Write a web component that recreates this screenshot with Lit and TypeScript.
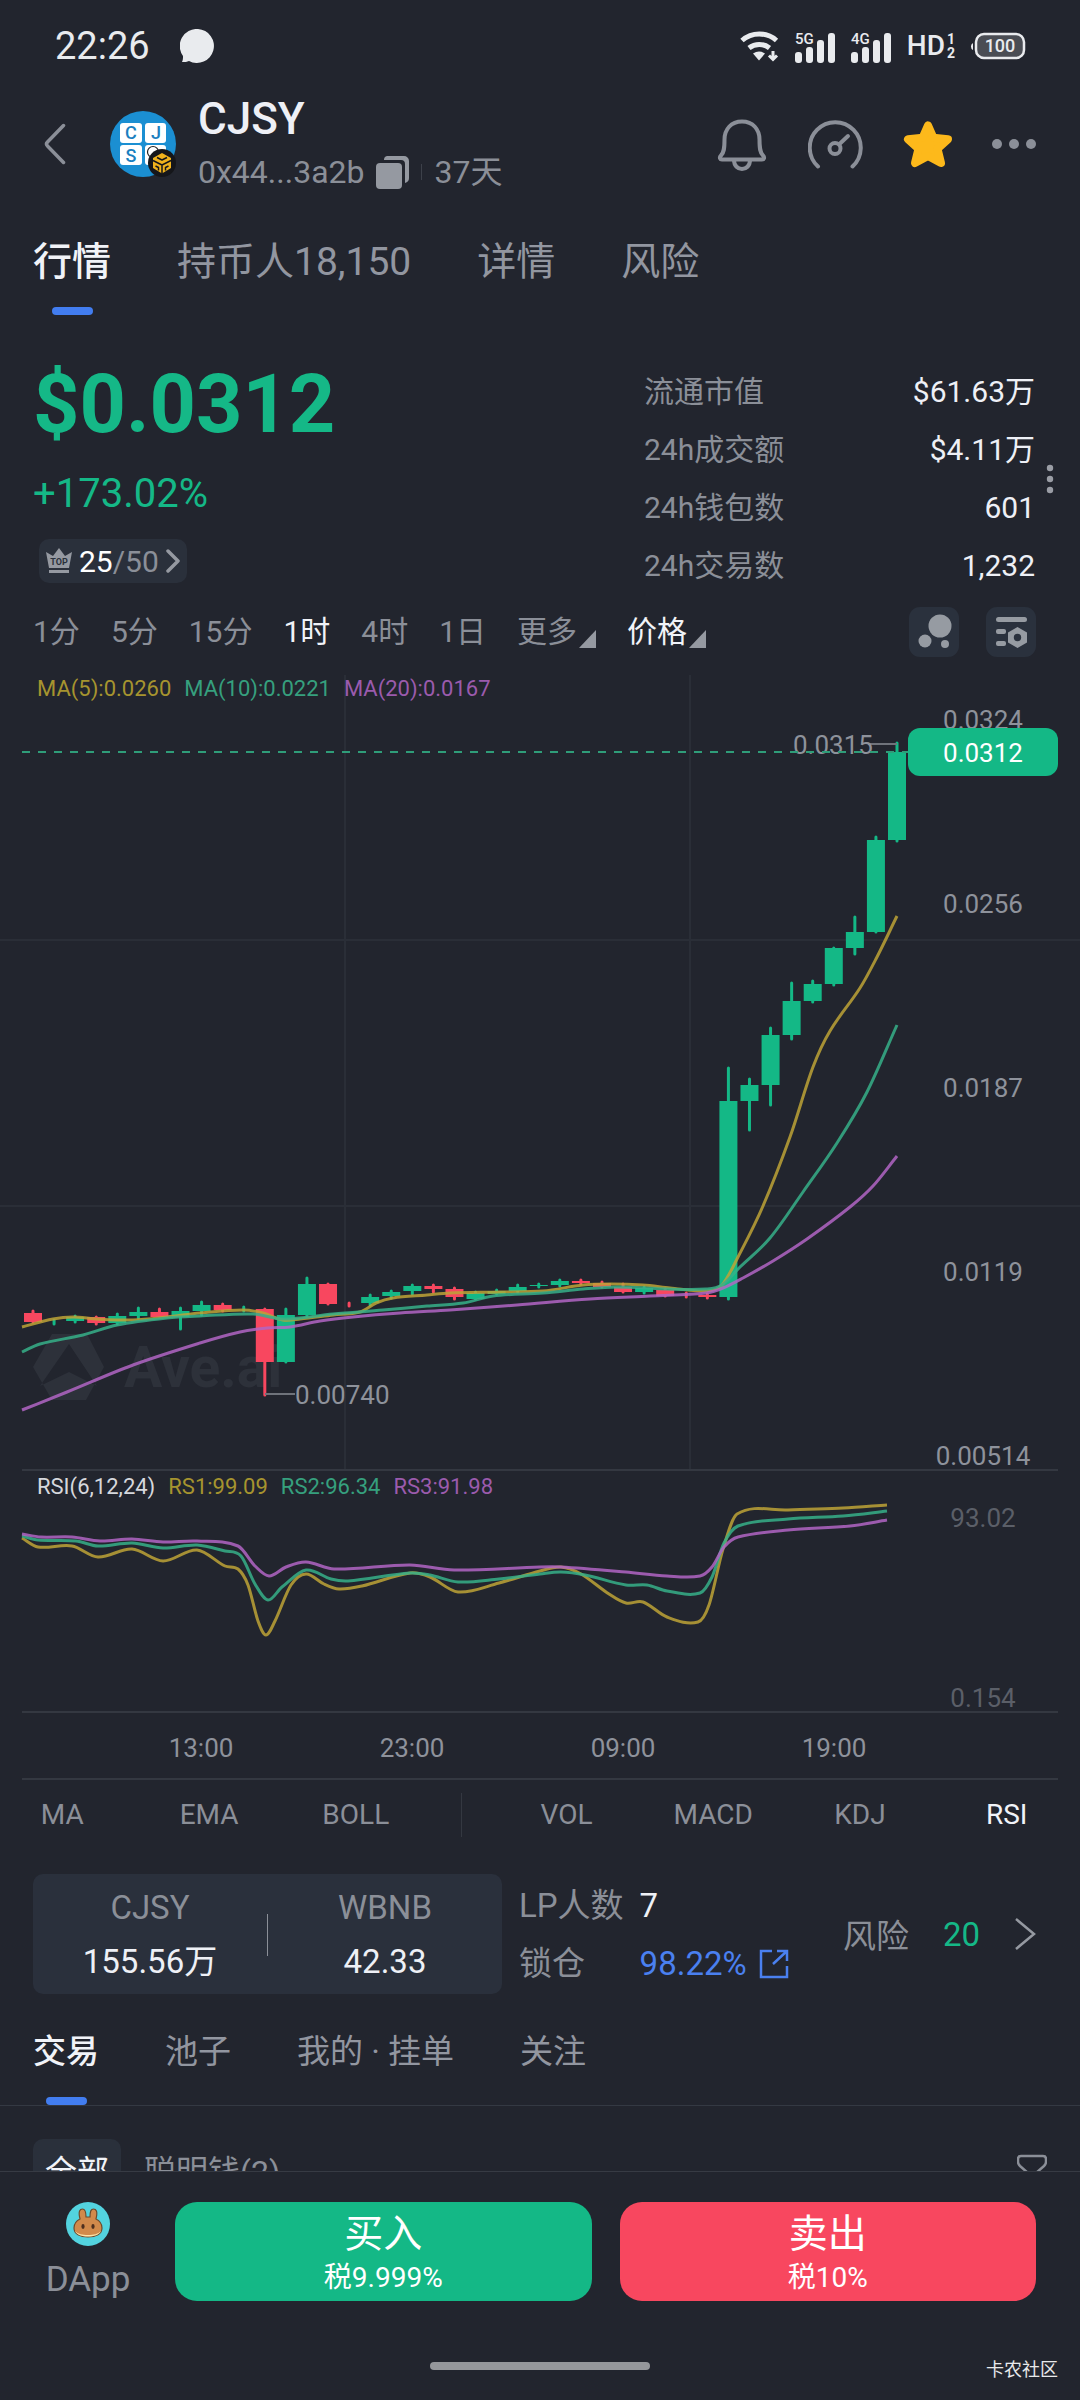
import { LitElement, html, svg, css } from "lit";
import { customElement, state } from "lit/decorators.js";
import { classMap } from "lit/directives/class-map.js";

type Point = [number, number];
type Candle = { up: boolean; open: number; close: number; high: number; low: number };

/* Candle geometry in chart units: direction, body top, body bottom, wick top, wick bottom. */
const CANDLES: Candle[] = (
  [
    [0, 1313, 1322, 1310, 1323], [1, 1321, 1321, 1319, 1325], [1, 1317, 1321, 1315, 1323],
    [0, 1317, 1323, 1316, 1325], [1, 1316, 1323, 1313, 1325], [1, 1312, 1316, 1307, 1319],
    [0, 1312, 1317, 1308, 1317], [1, 1311, 1317, 1307, 1330], [1, 1305, 1311, 1301, 1316],
    [0, 1305, 1310, 1303, 1312], [1, 1309, 1309, 1306, 1312], [0, 1309, 1362, 1308, 1396],
    [1, 1315, 1362, 1308, 1363], [1, 1284, 1315, 1277, 1317], [0, 1284, 1304, 1283, 1305],
    [0, 1304, 1304, 1302, 1307], [1, 1297, 1303, 1294, 1306], [1, 1292, 1296, 1290, 1299],
    [1, 1286, 1291, 1284, 1295], [0, 1286, 1289, 1284, 1293], [0, 1289, 1297, 1287, 1300],
    [1, 1293, 1299, 1291, 1300], [1, 1291, 1294, 1289, 1295], [1, 1287, 1291, 1284, 1293],
    [1, 1285, 1286, 1283, 1288], [1, 1281, 1285, 1279, 1287], [0, 1281, 1283, 1279, 1285],
    [0, 1283, 1287, 1281, 1288], [0, 1287, 1292, 1283, 1293], [1, 1288, 1292, 1286, 1294],
    [0, 1290, 1296, 1288, 1297], [0, 1295, 1295, 1292, 1298], [0, 1295, 1297, 1293, 1299],
    [1, 1101, 1297, 1067, 1300], [1, 1085, 1101, 1078, 1131], [1, 1035, 1085, 1027, 1106],
    [1, 1001, 1035, 982, 1040], [1, 984, 1001, 980, 1003], [1, 948, 984, 947, 986],
    [1, 932, 948, 916, 955], [1, 840, 932, 836, 933], [1, 752, 840, 742, 842],
  ] as number[][]
).map(([up, open, close, high, low]) => ({ up: up === 1, open, close, high, low }));

const MA5: Point[] = [
  [22, 1327], [53, 1319], [73, 1317], [97, 1319], [133, 1320], [167, 1317], [200, 1313], [243, 1310],
  [263, 1313], [283, 1320], [300, 1319], [333, 1315], [360, 1312], [376, 1303], [393, 1298], [427, 1295],
  [450, 1293], [500, 1292], [543, 1291], [583, 1285], [610, 1284], [643, 1285], [670, 1288], [706, 1291],
  [722, 1285], [738, 1257], [763, 1206], [790, 1137], [813, 1067], [830, 1031], [860, 988], [877, 957],
  [897, 916],
];
const MA10: Point[] = [
  [22, 1352], [40, 1344], [83, 1335], [117, 1325], [167, 1318], [200, 1316], [253, 1314], [283, 1319],
  [333, 1314], [383, 1310], [427, 1306], [463, 1303], [493, 1296], [543, 1293], [583, 1289], [617, 1287],
  [667, 1289], [706, 1289], [722, 1285], [740, 1267], [770, 1238], [803, 1192], [837, 1143], [867, 1092],
  [897, 1025],
];
const MA20: Point[] = [
  [22, 1410], [67, 1392], [133, 1365], [200, 1343], [240, 1332], [267, 1328], [290, 1327], [320, 1321],
  [353, 1317], [400, 1313], [450, 1310], [517, 1305], [590, 1299], [650, 1296], [706, 1293], [723, 1288],
  [743, 1278], [773, 1261], [807, 1239], [850, 1207], [873, 1186], [897, 1156],
];
const RS1: Point[] = [
  [22, 1538], [38, 1547], [72, 1546], [98, 1557], [132, 1549], [163, 1561], [197, 1550], [225, 1566],
  [238, 1569], [248, 1585], [258, 1621], [266, 1635], [275, 1621], [291, 1585], [306, 1574], [324, 1584],
  [339, 1589], [362, 1586], [410, 1573], [430, 1577], [458, 1592], [499, 1583], [540, 1571], [561, 1567],
  [581, 1574], [609, 1594], [626, 1603], [643, 1602], [667, 1617], [698, 1622], [709, 1605], [723, 1549],
  [737, 1514], [788, 1510], [843, 1508], [887, 1505],
];
const RS2: Point[] = [
  [22, 1536], [38, 1540], [76, 1541], [98, 1546], [132, 1543], [163, 1548], [197, 1545], [225, 1551],
  [241, 1556], [255, 1584], [268, 1600], [282, 1587], [306, 1570], [331, 1579], [348, 1581], [410, 1573],
  [430, 1575], [458, 1582], [499, 1579], [540, 1574], [561, 1572], [585, 1575], [626, 1585], [647, 1585],
  [667, 1591], [700, 1593], [712, 1577], [724, 1543], [738, 1526], [788, 1519], [843, 1516], [887, 1511],
];
const RS3: Point[] = [
  [22, 1534], [41, 1537], [72, 1537], [100, 1541], [132, 1539], [163, 1542], [197, 1541], [238, 1546],
  [255, 1566], [269, 1576], [286, 1567], [306, 1562], [334, 1569], [410, 1565], [454, 1570], [540, 1567],
  [561, 1567], [626, 1572], [667, 1576], [700, 1576], [712, 1567], [724, 1547], [738, 1537], [788, 1530],
  [850, 1526], [887, 1520],
];

/* Catmull-Rom spline through the points, written as cubic Béziers. */
function spline(p: Point[]): string {
  let d = `M${p[0][0]} ${p[0][1]}`;
  for (let i = 0; i < p.length - 1; i++) {
    const a = p[Math.max(i - 1, 0)];
    const b = p[i];
    const c = p[i + 1];
    const e = p[Math.min(i + 2, p.length - 1)];
    const k = (c[0] - b[0]) / 3;
    const s1 = (c[1] - a[1]) / (c[0] - a[0] || 1);
    const s2 = (e[1] - b[1]) / (e[0] - b[0] || 1);
    d += `C${(b[0] + k).toFixed(1)} ${(b[1] + s1 * k).toFixed(1)} ${(c[0] - k).toFixed(1)} ${(c[1] - s2 * k).toFixed(1)} ${c[0]} ${c[1]}`;
  }
  return d;
}

const FONT = css`
  :host {
    font-family: Roboto, "Noto Sans CJK SC", sans-serif;
  }
  button {
    font: inherit;
    color: inherit;
    background: none;
    border: 0;
    padding: 0;
    margin: 0;
    white-space: nowrap;
  }
  svg {
    display: block;
  }
`;

@customElement("status-bar")
class StatusBar extends LitElement {
  static styles = [
    FONT,
    css`
      :host {
        display: flex;
        align-items: center;
        height: 92px;
        padding: 0 54px 0 55px;
        color: #e9ebee;
      }
      .time {
        font-size: 38px;
        line-height: 48px;
        margin-right: 30px;
      }
      .space {
        flex: 1;
      }
      .icons {
        display: flex;
        align-items: center;
        gap: 15px;
      }
      .signal {
        overflow: visible;
      }
      .hd {
        display: flex;
        align-items: center;
        gap: 2px;
        font-size: 28px;
        line-height: 32px;
        font-weight: 500;
      }
      .sim {
        display: grid;
        font-size: 14px;
        line-height: 14px;
        font-weight: 700;
      }
    `,
  ];

  private signal(label: string) {
    return html`<svg class="signal" width="41" height="34" viewBox="0 -4 41 34" fill="#e9ebee" aria-label=${label}>
      <text x="0" y="11" font-size="15" font-weight="500">${label}</text>
      <rect x="0" y="19" width="7" height="11" rx="3" />
      <rect x="11" y="14" width="7" height="16" rx="3" />
      <rect x="22" y="7" width="7" height="23" rx="3" />
      <rect x="33" y="0" width="7" height="30" rx="3" />
    </svg>`;
  }

  render() {
    return html`
      <span class="time">22:26</span>
      <svg width="35" height="35" viewBox="0 0 35 35" fill="#e9ebee">
        <path d="M18 0a17 17 0 1 1-9 32c-2 1-4 1-7 1 1-2 1-4 1-6A17 17 0 0 1 18 0z" />
      </svg>
      <span class="space"></span>
      <div class="icons">
        <svg width="40" height="32" viewBox="0 0 40 32" fill="none" stroke="#e9ebee" stroke-width="5">
          <path d="M2 10.500a26 26 0 0 1 34.500 0" />
          <path d="M9 18a16.500 16.500 0 0 1 20.500 0" />
          <path d="M13 23.500q6-4 12 0L19 30.500z" fill="#e9ebee" stroke="none" />
          <path d="M33 21v7M29 25.500l4 4 4-4" stroke-width="3" />
        </svg>
        ${this.signal("5G")} ${this.signal("4G")}
        <div class="hd">
          <span>HD</span>
          <span class="sim"><span>1</span><span>2</span></span>
        </div>
        <svg width="56" height="28" viewBox="0 0 56 28">
          <path d="M3 11a4 4 0 0 0 0 7z" fill="#e9ebee" />
          <rect x="6" y="2" width="48" height="24" rx="8" fill="#4a4d54" stroke="#e9ebee" stroke-width="2.500" />
          <text x="30" y="20" text-anchor="middle" font-size="18" font-weight="500" fill="#e9ebee">100</text>
        </svg>
      </div>
    `;
  }
}

@customElement("token-header")
class TokenHeader extends LitElement {
  static styles = [
    FONT,
    css`
      :host {
        display: flex;
        align-items: center;
        height: 104px;
        padding: 0 44px;
      }
      .back {
        margin-right: 44px;
      }
      .avatar {
        margin-right: 22px;
      }
      .names {
        display: flex;
        flex-direction: column;
        flex: 1;
        padding-top: 4px;
      }
      .symbol {
        margin: 0;
        font-size: 44px;
        line-height: 52px;
        font-weight: 500;
        color: #eef0f6;
      }
      .meta {
        display: flex;
        align-items: center;
        gap: 12px;
        font-size: 32px;
        line-height: 54px;
        color: #8b8f98;
      }
      .rule {
        width: 1px;
        height: 16px;
        background: #3d414a;
      }
      .actions {
        display: flex;
        align-items: center;
        gap: 36px;
      }
    `,
  ];

  render() {
    return html`
      <button class="back" aria-label="返回">
        <svg width="22" height="42" viewBox="0 0 22 42" fill="none" stroke="#8b8f98" stroke-width="3.500" stroke-linecap="round" stroke-linejoin="round">
          <path d="M19.500 2.500L3.500 19q-2 2 0 4L19.500 39.500" />
        </svg>
      </button>
      <svg class="avatar" width="66" height="66" viewBox="0 0 66 66" role="img" aria-label="CJSY">
        <circle cx="33" cy="33" r="33" fill="#1b8fd2" />
        <g fill="#fff">
          <rect x="10" y="12" width="22" height="20" rx="3" />
          <rect x="35" y="12" width="21" height="20" rx="3" />
          <rect x="10" y="34" width="22" height="20" rx="3" />
          <rect x="35" y="34" width="21" height="20" rx="3" />
        </g>
        <g fill="#1b7fc0" font-size="18" font-weight="500" text-anchor="middle">
          <text x="21" y="28">C</text>
          <text x="46" y="28">J</text>
          <text x="21" y="51">S</text>
        </g>
        <circle cx="43" cy="41" r="5.500" fill="none" stroke="#222" stroke-width="1.200" />
        <circle cx="52" cy="52" r="14" fill="#15161a" />
        <path d="M52 42l9 5v10l-9 5.500-9-5.500V47z" fill="#f0b21c" />
        <g fill="none" stroke="#15161a" stroke-width="1.500" stroke-linejoin="round">
          <path d="M43 49.500l9 4.500 9-4.500M52 54v9M47 46.500l5 2.500 5-2.500M45.500 55l3 1.500v3M58.500 55l-3 1.500v3" />
        </g>
      </svg>
      <div class="names">
        <h1 class="symbol">CJSY</h1>
        <div class="meta">
          <span>0x44...3a2b</span>
          <button aria-label="复制地址">
            <svg width="33" height="33" viewBox="0 0 33 33" fill="#9599a1">
              <path d="M11 0h17a5 5 0 0 1 5 5v17a5 5 0 0 1-4 5V8a4 4 0 0 0-4-4H8a4 4 0 0 1 3-4z" />
              <rect x="0" y="7" width="26" height="26" rx="4" />
            </svg>
          </button>
          <span class="rule"></span>
          <span>37天</span>
        </div>
      </div>
      <div class="actions">
        <button aria-label="提醒">
          <svg width="56" height="56" viewBox="2 0 56 56" fill="none" stroke="#8b8f98" stroke-width="4" stroke-linejoin="round">
            <path d="M28 5.500c-11 0-17.500 8-17.500 18 0 9-.5 13-3.500 16-2 2-1 4 1 4h40c2 0 3-2 1-4-3-3-3.500-7-3.500-16 0-10-6.500-18-17.500-18z" />
            <path d="M20 44c0 6 4 9 8 9s8-3 8-9" />
          </svg>
        </button>
        <button aria-label="速度">
          <svg width="56" height="56" viewBox="1 0 56 56" fill="none" stroke="#8b8f98" stroke-width="4" stroke-linecap="round">
            <path d="M11 50.500a25.500 25.500 0 1 1 34.500 0" />
            <circle cx="28" cy="32.500" r="5.500" />
            <path d="M32.500 28L41 20" />
          </svg>
        </button>
        <button aria-label="收藏">
          <svg width="56" height="56" viewBox="0 0 56 56" fill="#fdb91b" stroke="#fdb91b" stroke-width="8" stroke-linejoin="round">
            <path d="M28 9.500l5.500 12.300 14.500 1.400-10.500 9.600 3.500 14.200-13-7-13 7 3.500-14.200L8 23.200l14.500-1.400z" />
          </svg>
        </button>
        <button aria-label="更多">
          <svg width="44" height="56" viewBox="0 0 44 56" fill="#8b8f98">
            <circle cx="5" cy="28" r="5" />
            <circle cx="22" cy="28" r="5" />
            <circle cx="39" cy="28" r="5" />
          </svg>
        </button>
      </div>
    `;
  }
}

@customElement("tab-bar")
class TabBar extends LitElement {
  static properties = { tabs: { type: Array }, compact: { type: Boolean, reflect: true }, active: { state: true } };
  declare tabs: string[];
  declare compact: boolean;
  declare active: number;

  constructor() {
    super();
    this.tabs = [];
    this.compact = false;
    this.active = 0;
  }

  static styles = [
    FONT,
    css`
      :host {
        display: flex;
        gap: 66px;
        padding: 42px 33px 0;
        font-size: 39px;
        color: #9296a0;
      }
      :host([compact]) {
        padding-top: 34px;
        font-size: 33px;
        border-bottom: 1px solid #343943;
      }
      .tab {
        display: flex;
        flex-direction: column;
        align-items: center;
        gap: 21px;
        line-height: 48px;
      }
      .tab::after {
        content: "";
        width: 41px;
        height: 8px;
        border-radius: 4px;
      }
      .on {
        color: #f1f3f8;
        font-weight: 500;
      }
      .on::after {
        background: #427df0;
      }
    `,
  ];

  render() {
    return this.tabs.map(
      (t, i) => html`<button class=${classMap({ tab: true, on: i === this.active })} @click=${() => (this.active = i)}>${t}</button>`,
    );
  }
}

@customElement("token-overview")
class TokenOverview extends LitElement {
  static styles = [
    FONT,
    css`
      :host {
        display: grid;
        grid-template-columns: minmax(0, 1fr) 391px 8px;
        column-gap: 11px;
        padding: 48px 26px 0 33px;
      }
      .left {
        display: flex;
        flex-direction: column;
        align-items: flex-start;
        color: #15b887;
      }
      .price {
        font-size: 81px;
        line-height: 84px;
        font-weight: 700;
      }
      .change {
        margin-top: 23px;
        font-size: 40px;
        line-height: 48px;
      }
      .rank {
        display: flex;
        align-items: center;
        gap: 6px;
        height: 44px;
        margin: 21px 0 0 6px;
        padding: 0 6px;
        border-radius: 10px;
        background: #2a303b;
        color: #8b8f98;
        font-size: 30px;
      }
      .rank b {
        font-weight: 400;
        color: #fff;
      }
      .stats {
        margin: 0;
      }
      .stat {
        display: flex;
        justify-content: space-between;
        font-size: 30px;
        line-height: 58px;
        color: #8b8f98;
      }
      .stat dd {
        margin: 0;
        color: #eef0f6;
      }
      .dots {
        align-self: center;
      }
    `,
  ];

  render() {
    const stats = [
      ["流通市值", "$61.63万"],
      ["24h成交额", "$4.11万"],
      ["24h钱包数", "601"],
      ["24h交易数", "1,232"],
    ];
    return html`
      <div class="left">
        <div class="price">$0.0312</div>
        <div class="change">+173.02%</div>
        <button class="rank">
          <svg width="28" height="28" viewBox="0 0 28 28" fill="#9599a1">
            <path d="M1 5l7 4 6-8 6 8 7-4-3 16H4z" />
            <rect x="4" y="23" width="20" height="3" />
            <text x="14" y="18" font-size="9" font-weight="700" text-anchor="middle" fill="#2a303b">TOP</text>
          </svg>
          <span><b>25</b>/50</span>
          <svg width="16" height="24" viewBox="0 0 16 24" fill="none" stroke="#9599a1" stroke-width="3.500" stroke-linecap="round" stroke-linejoin="round">
            <path d="M3 2l10 10L3 22" />
          </svg>
        </button>
      </div>
      <dl class="stats">
        ${stats.map(([k, v]) => html`<div class="stat"><dt>${k}</dt><dd>${v}</dd></div>`)}
      </dl>
      <svg class="dots" width="8" height="30" viewBox="0 0 8 30" fill="#9a9da5">
        <circle cx="4" cy="4" r="3.200" />
        <circle cx="4" cy="15" r="3.200" />
        <circle cx="4" cy="26" r="3.200" />
      </svg>
    `;
  }
}

@customElement("interval-bar")
class IntervalBar extends LitElement {
  @state() private active = 3;

  static styles = [
    FONT,
    css`
      :host {
        display: flex;
        align-items: center;
        gap: 31px;
        padding: 12px 44px 0 33px;
        font-size: 30px;
        line-height: 50px;
        color: #8b8f98;
      }
      .on {
        color: #f1f3f8;
      }
      .menu {
        display: flex;
        align-items: flex-end;
        gap: 2px;
      }
      .menu svg {
        margin-bottom: 9px;
      }
      .tools {
        display: flex;
        gap: 27px;
        margin-left: auto;
      }
      .tool {
        width: 50px;
        height: 50px;
        border-radius: 11px;
        background: #2a313d;
      }
    `,
  ];

  private corner() {
    return html`<svg width="17" height="18" viewBox="0 0 17 18" fill="#9599a1"><path d="M17 0v18H0z" /></svg>`;
  }

  render() {
    return html`
      ${["1分", "5分", "15分", "1时", "4时", "1日"].map(
        (t, i) => html`<button class=${classMap({ on: i === this.active })} @click=${() => (this.active = i)}>${t}</button>`,
      )}
      <button class="menu">更多${this.corner()}</button>
      <button class="menu on">价格${this.corner()}</button>
      <div class="tools">
        <button class="tool" aria-label="气泡图">
          <svg width="50" height="50" viewBox="0 0 50 50" fill="#969ba2">
            <circle cx="31" cy="19" r="11.500" />
            <circle cx="16" cy="34" r="6.500" />
            <circle cx="36" cy="37" r="4" />
          </svg>
        </button>
        <button class="tool" aria-label="图表设置">
          <svg width="50" height="50" viewBox="0 0 50 50" fill="#969ba2">
            <rect x="10" y="10" width="31" height="5" rx="2.500" />
            <rect x="10" y="22" width="10" height="5" rx="2" />
            <rect x="10" y="34" width="10" height="5" rx="2" />
            <path fill-rule="evenodd" d="M31.500 20l9.500 5.500v10L31.500 41 22 35.500v-10zm0 6.800a3.700 3.700 0 1 0 0 7.400 3.700 3.700 0 0 0 0-7.400z" />
          </svg>
        </button>
      </div>
    `;
  }
}

@customElement("price-chart")
class PriceChart extends LitElement {
  static styles = [
    FONT,
    css`
      :host {
        display: block;
        position: relative;
      }
      .plot {
        width: 100%;
        height: auto;
      }
      .legend {
        position: absolute;
        left: 37px;
        display: flex;
        gap: 13px;
        font-size: 22px;
        line-height: 26px;
      }
      .ma {
        top: 19px;
      }
      .rsi {
        top: 817px;
      }
      .white { color: #d6d8dd; }
      .yellow { color: #a6942f; }
      .green { color: #36a07e; }
      .purple { color: #9b5bad; }
      .grid { stroke: #2a2e37; stroke-width: 2; }
      .frame { stroke: #343841; stroke-width: 2; }
      .mark { fill: #2d313a; }
      .brand { fill: #2d313a; font-size: 57px; font-weight: 700; }
      .up { fill: #14b886; stroke: #14b886; }
      .down { fill: #f8475f; stroke: #f8475f; }
      .wick { stroke-width: 3; stroke-linecap: round; }
      .body { stroke: none; }
      .line { fill: none; stroke-width: 3; stroke-opacity: 0.85; }
      .l1 { stroke: #bda336; }
      .l2 { stroke: #36b088; }
      .l3 { stroke: #b265c4; }
      .now { stroke: #2f9d79; stroke-width: 2; stroke-dasharray: 8 8; }
      .lead { stroke: #6f737b; stroke-width: 2; }
      .num { fill: #8e929b; font-size: 26px; }
      .mid { text-anchor: middle; }
      .dim { fill: #5b5f68; }
      .tag { fill: #14b886; }
      .tagnum { fill: #fff; }
    `,
  ];

  render() {
    const axis: [string, number][] = [
      ["0.0324", 729], ["0.0256", 913], ["0.0187", 1097], ["0.0119", 1281], ["0.00514", 1465],
    ];
    const times: [string, number][] = [["13:00", 201], ["23:00", 412], ["09:00", 623], ["19:00", 834]];
    return html`
      <svg class="plot" viewBox="0 657 1080 1123" role="img" aria-label="CJSY 1时 K线图">
        <path class="grid" d="M345 675V1470M690 675V1470M0 940H1080M0 1206H1080" />
        <path class="mark" fill-rule="evenodd" d="M52 1334h35l17 33-18 33H52l-19-33zM69 1344l-29 42 29-14 28 14z" />
        <text class="brand" x="124" y="1387">Ave.ai</text>
        <path class="frame" d="M22 1470H1058M22 1712H1058M22 1779H1058" />
        ${CANDLES.map((c, i) => {
          const x = 33 + (i * 864) / 41;
          return svg`<g class=${c.up ? "up" : "down"}>
            <path class="wick" d="M${x} ${c.high + 1}V${c.low - 1}" />
            <rect class="body" x=${x - 9} y=${c.open} width="18" height=${c.close - c.open} />
          </g>`;
        })}
        <path class="line l1" d=${spline(MA5)} />
        <path class="line l2" d=${spline(MA10)} />
        <path class="line l3" d=${spline(MA20)} />
        <path class="line l1" d=${spline(RS1)} />
        <path class="line l2" d=${spline(RS2)} />
        <path class="line l3" d=${spline(RS3)} />
        <path class="lead" d="M868 744H897M265 1394H295" />
        <text class="num" x="793" y="754">0.0315</text>
        <text class="num" x="295" y="1404">0.00740</text>
        <path class="now" d="M22 752H908" />
        ${axis.map(([t, y]) => svg`<text class="num mid" x="983" y=${y}>${t}</text>`)}
        <text class="num mid dim" x="983" y="1527">93.02</text>
        <text class="num mid dim" x="983" y="1707">0.154</text>
        <rect class="tag" x="908" y="728" width="150" height="48" rx="12" />
        <text class="num mid tagnum" x="983" y="762">0.0312</text>
        ${times.map(([t, x]) => svg`<text class="num mid" x=${x} y="1757">${t}</text>`)}
      </svg>
      <div class="legend ma">
        <span class="yellow">MA(5):0.0260</span>
        <span class="green">MA(10):0.0221</span>
        <span class="purple">MA(20):0.0167</span>
      </div>
      <div class="legend rsi">
        <span class="white">RSI(6,12,24)</span>
        <span class="yellow">RS1:99.09</span>
        <span class="green">RS2:96.34</span>
        <span class="purple">RS3:91.98</span>
      </div>
    `;
  }
}

@customElement("indicator-bar")
class IndicatorBar extends LitElement {
  @state() private sub = "RSI";

  static styles = [
    FONT,
    css`
      :host {
        display: grid;
        grid-template-columns: repeat(3, 1fr) 64px repeat(4, 1fr);
        align-items: center;
        height: 70px;
        margin-left: -11px;
        font-size: 28px;
        line-height: 44px;
        color: #8b8f98;
      }
      .rule {
        justify-self: center;
        width: 1px;
        height: 44px;
        background: #343841;
      }
      .on {
        color: #f1f3f8;
      }
    `,
  ];

  render() {
    return html`
      ${["MA", "EMA", "BOLL"].map((t) => html`<button>${t}</button>`)}
      <span class="rule"></span>
      ${["VOL", "MACD", "KDJ", "RSI"].map(
        (t) => html`<button class=${classMap({ on: t === this.sub })} @click=${() => (this.sub = t)}>${t}</button>`,
      )}
    `;
  }
}

@customElement("pool-summary")
class PoolSummary extends LitElement {
  static styles = [
    FONT,
    css`
      :host {
        display: flex;
        align-items: center;
        margin-top: 24px;
        padding: 0 44px 0 33px;
        font-size: 33px;
        color: #8b8f98;
      }
      .pair {
        display: grid;
        grid-template-columns: 1fr 1px 1fr;
        align-items: center;
        box-sizing: border-box;
        flex: 0 1 469px;
        height: 120px;
        padding-top: 2px;
        border-radius: 10px;
        background: #2a303c;
        text-align: center;
        line-height: 54px;
      }
      .rule {
        height: 42px;
        background: #8b8f98;
      }
      .value {
        color: #eef0f6;
      }
      .lock {
        display: grid;
        grid-template-columns: auto auto;
        column-gap: 16px;
        margin-left: 17px;
        padding-top: 2px;
        line-height: 58px;
      }
      .link {
        display: flex;
        align-items: center;
        gap: 12px;
        color: #4a80f0;
        text-decoration: none;
      }
      .risk {
        display: flex;
        align-items: center;
        margin-left: auto;
        gap: 34px;
      }
      .score {
        color: #15b887;
      }
    `,
  ];

  render() {
    return html`
      <div class="pair">
        <div><div>CJSY</div><div class="value">155.56万</div></div>
        <span class="rule"></span>
        <div><div>WBNB</div><div class="value">42.33</div></div>
      </div>
      <div class="lock">
        <span>LP人数</span><span class="value">7</span>
        <span>锁仓</span>
        <a class="link" href="#lock">98.22%
          <svg width="30" height="30" viewBox="0 0 30 30" fill="none" stroke="#4a80f0" stroke-width="2.500">
            <path d="M13 2H2v26h26V17M18 2h10v10M28 2L14 15" />
          </svg>
        </a>
      </div>
      <button class="risk">
        <span>风险</span>
        <span class="score">20</span>
        <svg width="22" height="34" viewBox="0 0 22 34" fill="none" stroke="#9599a1" stroke-width="2.500">
          <path d="M2 2l18 15L2 32" />
        </svg>
      </button>
    `;
  }
}

@customElement("trade-filter")
class TradeFilter extends LitElement {
  static styles = [
    FONT,
    css`
      :host {
        display: flex;
        align-items: flex-start;
        flex: 1;
        min-height: 0;
        overflow: hidden;
        padding: 33px 33px 0;
        font-size: 32px;
        line-height: 66px;
        color: #8b8f98;
      }
      .all {
        padding: 0 12px;
        border-radius: 10px;
        background: #2a303b;
        color: #f1f3f8;
      }
      .smart {
        margin-left: 23px;
      }
      .filter {
        margin: 15px 0 0 auto;
      }
    `,
  ];

  render() {
    return html`
      <button class="all">全部</button>
      <button class="smart">聪明钱(2)</button>
      <button class="filter" aria-label="筛选">
        <svg width="30" height="32" viewBox="0 0 30 32" fill="none" stroke="#8b8f98" stroke-width="2.500" stroke-linejoin="round">
          <path d="M4 2h22q3 0 3 3v3q0 2-2 4l-8 7v11l-8-4v-7L3 12Q1 10 1 8V5q0-3 3-3z" />
        </svg>
      </button>
    `;
  }
}

@customElement("trade-footer")
class TradeFooter extends LitElement {
  static styles = [
    FONT,
    css`
      :host {
        display: block;
        border-top: 1px solid #373b44;
        color: #fff;
      }
      .row {
        display: grid;
        grid-template-columns: 101px 1fr 1fr;
        column-gap: 28px;
        padding: 30px 44px 0 46px;
      }
      .dapp {
        display: flex;
        flex-direction: column;
        align-items: center;
        gap: 12px;
        margin-right: 17px;
        font-size: 35px;
        line-height: 44px;
        color: #8b8f98;
      }
      .trade {
        display: flex;
        flex-direction: column;
        align-items: center;
        justify-content: center;
        height: 99px;
        padding-top: 4px;
        border-radius: 22px;
        font-size: 28px;
        line-height: 40px;
      }
      .trade b {
        font-size: 39px;
        line-height: 48px;
        font-weight: 400;
      }
      .buy {
        background: #14b886;
      }
      .sell {
        background: #f8475f;
      }
      .end {
        display: grid;
        grid-template-columns: 1fr 220px 1fr;
        align-items: center;
        height: 28px;
        padding: 50px 22px 20px;
      }
      .home {
        grid-column: 2;
        height: 8px;
        border-radius: 4px;
        background: #95979b;
      }
      .credit {
        align-self: end;
        justify-self: end;
        font-size: 18px;
        line-height: 20px;
        color: #e8e9eb;
      }
    `,
  ];

  render() {
    return html`
      <div class="row">
        <button class="dapp">
          <svg width="44" height="44" viewBox="0 0 44 44">
            <circle cx="22" cy="22" r="22" fill="#53d3df" />
            <path d="M14 17c-2-8 0-10 2.500-10S20 9 20 15h4c0-6 1-8 3.500-8S32 9 30 17c4 2 6 5 6 9 0 6-6 9-14 9S8 32 8 26c0-4 2-7 6-9z" fill="#d18a4b" stroke="#6d4a2c" stroke-width="1.200" />
            <path d="M9 29c2 4 7 5.500 13 5.500S33 33 35 29c-3 3-7 4-13 4s-10-1-13-4z" fill="#fbe3a8" />
            <ellipse cx="17" cy="24.500" rx="1.600" ry="2.400" fill="#4e2f1e" />
            <ellipse cx="27" cy="24.500" rx="1.600" ry="2.400" fill="#4e2f1e" />
          </svg>
          DApp
        </button>
        <button class="trade buy"><b>买入</b>税9.999%</button>
        <button class="trade sell"><b>卖出</b>税10%</button>
      </div>
      <div class="end">
        <span class="home"></span>
        <span class="credit">卡农社区</span>
      </div>
    `;
  }
}

@customElement("app-root")
class AppRoot extends LitElement {
  static styles = css`
    :host {
      display: flex;
      flex-direction: column;
      height: 100vh;
      overflow: hidden;
      background: #22252e;
    }
  `;

  render() {
    return html`
      <status-bar></status-bar>
      <token-header></token-header>
      <tab-bar .tabs=${["行情", "持币人18,150", "详情", "风险"]}></tab-bar>
      <token-overview></token-overview>
      <interval-bar></interval-bar>
      <price-chart></price-chart>
      <indicator-bar></indicator-bar>
      <pool-summary></pool-summary>
      <tab-bar compact .tabs=${["交易", "池子", "我的 · 挂单", "关注"]}></tab-bar>
      <trade-filter></trade-filter>
      <trade-footer></trade-footer>
    `;
  }
}
